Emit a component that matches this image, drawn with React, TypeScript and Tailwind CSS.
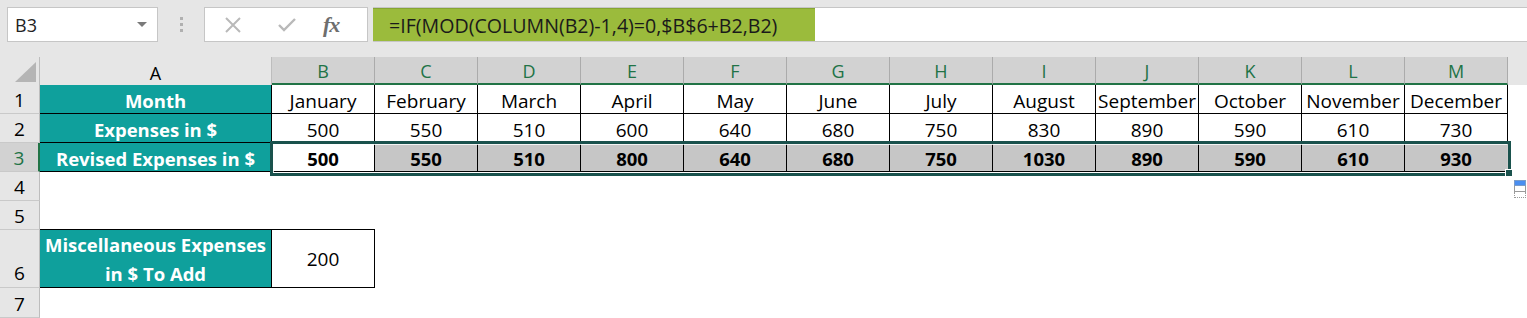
import React from "react";

const months = ["January","February","March","April","May","June","July","August","September","October","November","December"];
const exp = [500,550,510,600,640,680,750,830,890,590,610,730];
const rev = [500,550,510,800,640,680,750,1030,890,590,610,930];
const letters = ["B","C","D","E","F","G","H","I","J","K","L","M"];

function RowHead({ n, active, tall }: { n: number; active?: boolean; tall?: boolean }) {
  return (
    <div
      className={`flex justify-center border-b border-[#c9c9c9] ${tall ? "items-end pb-[1px]" : "items-center pt-[2px]"} ${
        active
          ? "bg-[#d2d2d2] text-[#217346] border-r-2 border-r-[#217346]"
          : "bg-[#e6e6e6] text-black border-r border-r-[#bdbdbd]"
      }`}
    >
      {n}
    </div>
  );
}

export default function App() {
  return (
    <div className="w-[1527px] h-[318px] overflow-hidden bg-white font-['Open_Sans',sans-serif] text-[19px] leading-[26px] relative">
      {/* Formula bar area */}
      <div className="h-[57px] bg-[#e6e6e6] pt-[7px] flex items-start">
        <div className="ml-[7px] w-[151px] h-[35px] bg-white border border-[#c6c6c6] flex items-center pl-[7px] pr-[10px] justify-between text-[18px]">
          <span className="text-[#222]">B3</span>
          <svg width="10" height="6" viewBox="0 0 10 6"><path d="M0 0 L10 0 L5 5 Z" fill="#7a7a7a" /></svg>
        </div>
        <div className="w-[46px] h-[35px] flex flex-col items-center justify-center gap-[3px]">
          <div className="w-[3px] h-[3px] bg-[#b0b0b0]" />
          <div className="w-[3px] h-[3px] bg-[#b0b0b0]" />
          <div className="w-[3px] h-[3px] bg-[#b0b0b0]" />
        </div>
        <div className="w-[164px] h-[35px] bg-white border border-[#c6c6c6] flex items-center">
          <svg className="ml-[20px]" width="16" height="16" viewBox="0 0 16 16"><path d="M1 1 L15 15 M15 1 L1 15" stroke="#b9b9b9" strokeWidth="2" /></svg>
          <svg className="ml-[37px]" width="18" height="14" viewBox="0 0 18 14"><path d="M1 7 L6 12 L17 1" stroke="#b9b9b9" strokeWidth="2.4" fill="none" /></svg>
          <span className="ml-[27px] font-['Liberation_Serif',serif] italic font-bold text-[22px] text-[#6e6e6e] tracking-[-1px]">fx</span>
        </div>
        <div className="ml-[5px] flex-1 h-[35px] flex border-y border-[#c6c6c6] bg-white">
          <div className="w-[442px] h-full bg-[#9bbb3c] border-t border-[#86a632] flex items-center pl-[16px] pt-[2px] text-[19.6px] text-[#1a1a1a] whitespace-nowrap">
            =IF(MOD(COLUMN(B2)-1,4)=0,$B$6+B2,B2)
          </div>
          <div className="flex-1 bg-white" />
        </div>
      </div>

      {/* Sheet grid */}
      <div
        className="grid"
        style={{ gridTemplateColumns: "40px 232px repeat(12, 103px) 1fr", gridTemplateRows: "28px 29px 29px 29px 29px 29px 58px 30px" }}
      >
        {/* header row */}
        <div className="bg-[#e6e6e6] border-r border-[#bdbdbd] relative">
          <svg className="absolute left-[15px] top-[5px]" width="22" height="21" viewBox="0 0 22 21"><path d="M21 0 L21 20 L0 20 Z" fill="#b5b5b5" /></svg>
        </div>
        <div className="bg-[#e6e6e6] border-r border-[#bdbdbd] flex items-center justify-center pt-[3px] text-black text-[18px]">A</div>
        {letters.map((l) => (
          <div key={l} className="bg-[#d2d2d2] border-r border-[#ababab] border-b-2 border-b-[#217346] flex items-center justify-center pt-[2px] text-[#217346] text-[18px]">
            {l}
          </div>
        ))}
        <div className="bg-[#e6e6e6]" />

        {/* row 1 */}
        <RowHead n={1} />
        <div className="bg-[#0fa09c] border-r border-b border-black flex items-center justify-center pt-[3px] text-white font-bold text-[18.5px]">Month</div>
        {months.map((m) => (
          <div key={m} className="border-r border-b border-black flex items-center justify-center pt-[3px] text-black whitespace-nowrap">{m}</div>
        ))}
        <div />

        {/* row 2 */}
        <RowHead n={2} />
        <div className="bg-[#0fa09c] border-r border-b border-black flex items-center justify-center pt-[3px] text-white font-bold text-[18.5px]">Expenses in $</div>
        {exp.map((v, i) => (
          <div key={i} className="border-r border-b border-black flex items-center justify-center pt-[3px] text-black">{v}</div>
        ))}
        <div />

        {/* row 3 */}
        <RowHead n={3} active />
        <div className="bg-[#0fa09c] border-r border-b border-black flex items-center justify-center pt-[3px] text-white font-bold text-[18.5px] whitespace-nowrap">Revised Expenses in $</div>
        {rev.map((v, i) => (
          <div key={i} className={`${i === 0 ? "bg-white" : "bg-[#c6c6c6]"} border-r border-b border-black flex items-center justify-center pt-[3px] text-black font-bold text-[18.5px]`}>{v}</div>
        ))}
        <div />

        {/* row 4 */}
        <RowHead n={4} />
        <div className="col-span-14" />

        {/* row 5 */}
        <RowHead n={5} />
        <div className="border-b border-black" />
        <div className="border-b border-black" />
        <div className="col-span-12" />

        {/* row 6 */}
        <RowHead n={6} tall />
        <div className="bg-[#0fa09c] border-r border-b border-black flex flex-col items-center justify-center text-white font-bold text-[18.5px] leading-[29px] pt-[1px]">
          <span>Miscellaneous Expenses</span>
          <span>in $ To Add</span>
        </div>
        <div className="border-r border-b border-black flex items-center justify-center text-black">200</div>
        <div className="col-span-12" />

        {/* row 7 */}
        <RowHead n={7} />
        <div className="col-span-14" />
      </div>

      {/* selection overlay */}
      <div className="absolute left-[270px] top-[141px] w-[1241px] h-[35px] border-[3px] border-[#1a524d] pointer-events-none">
        <div className="absolute inset-0 border border-white/80" />
      </div>
      <div className="absolute left-[1505px] top-[169px] w-[8px] h-[8px] bg-[#1a524d] border border-white" />

      {/* quick analysis icon */}
      <div className="absolute left-[1514px] top-[180px] w-[13px] h-[22px]">
        <div className="w-[12px] h-[6px] bg-[#4a8ef0] border border-[#7c9cc8]" />
        <div className="w-[12px] h-[6px] bg-white border border-t-0 border-[#9a9a9a]" />
        <div className="w-[12px] h-[6px] border border-dotted border-t-0 border-[#9a9a9a]" />
      </div>
    </div>
  );
}
